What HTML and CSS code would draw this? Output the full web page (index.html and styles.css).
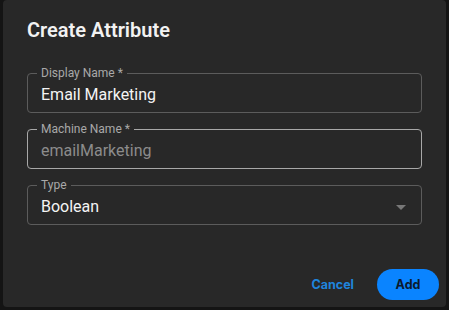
FILE: index.html
```html
<!DOCTYPE html>
<html>
<head>
<meta charset="utf-8">
<link rel="stylesheet" href="styles.css">
</head>
<body>
<div class="backdrop">
  <div class="dialog">
    <h2 class="title">Create Attribute</h2>
    <div class="fields">
      <fieldset class="field">
        <legend class="label">Display Name *</legend>
        <div class="value">Email Marketing</div>
      </fieldset>
      <fieldset class="field field-active">
        <legend class="label">Machine Name *</legend>
        <div class="value value-muted">emailMarketing</div>
      </fieldset>
      <fieldset class="field">
        <legend class="label">Type</legend>
        <div class="value value-select">
          <span>Boolean</span>
          <span class="caret"></span>
        </div>
      </fieldset>
    </div>
    <div class="actions">
      <button class="btn btn-text">Cancel</button>
      <button class="btn btn-primary">Add</button>
    </div>
  </div>
</div>
</body>
</html>
```
FILE: styles.css
```css
* { box-sizing: border-box; }
html, body { margin: 0; padding: 0; }
body {
  background: #141414;
  font-family: Roboto, "Liberation Sans", sans-serif;
  width: 449px;
  height: 310px;
  overflow: hidden;
}
.backdrop {
  padding-left: 3px;
}
.dialog {
  width: 443px;
  height: 307px;
  background: #282828;
  border-radius: 4px;
  padding: 17px 24px 0 24px;
  display: flex;
  flex-direction: column;
}
.title {
  margin: 0;
  font-size: 20px;
  line-height: 26px;
  font-weight: 600;
  color: #f2f2f2;
  letter-spacing: 0;
}
.fields {
  margin-top: 23px;
  display: flex;
  flex-direction: column;
  gap: 9px;
}
.field {
  margin: 0;
  padding: 0 13px;
  border: 1px solid #5c5c5c;
  border-radius: 4px;
  min-width: 0;
}
.field-active {
  border-color: #a8a8a8;
}
.label {
  margin-left: -4px;
  padding: 0 4px;
  font-size: 12px;
  line-height: 14px;
  color: #a9a9a9;
}
.value {
  font-size: 16px;
  line-height: 20px;
  padding: 5px 0 7px;
  color: #f4f4f4;
}
.value-muted {
  color: #8c8c8c;
}
.value-select {
  display: flex;
  justify-content: space-between;
  align-items: center;
}
.caret {
  width: 0;
  height: 0;
  border-left: 5px solid transparent;
  border-right: 5px solid transparent;
  border-top: 5px solid #787878;
  margin-right: 2px;
}
.actions {
  margin-top: auto;
  display: flex;
  justify-content: flex-end;
  align-items: center;
  gap: 13px;
  padding: 0 0 7px;
  margin-right: -17px;
}
.btn {
  font-family: Inter, "Liberation Sans", sans-serif;
  font-size: 12.5px;
  font-weight: 700;
  border: none;
  background: none;
  cursor: pointer;
  height: 31px;
}
.btn-text {
  color: #1f84dc;
  padding: 0 10px;
}
.btn-primary {
  background: #0a84ff;
  color: #0b1a2e;
  border-radius: 16px;
  width: 62px;
  padding: 0;
}
```
